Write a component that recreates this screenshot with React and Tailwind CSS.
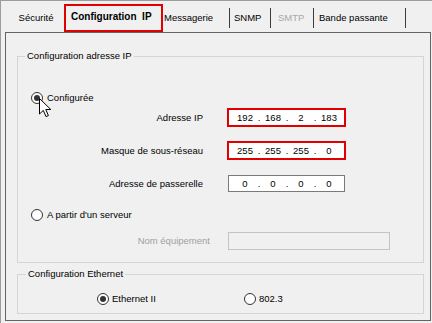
import React from "react";

function Radio({ checked }) {
  return (
    <span className="w-[12px] h-[12px] rounded-full border border-[#333333] bg-white flex items-center justify-center shrink-0">
      {checked && <span className="w-[6px] h-[6px] rounded-full bg-[#333333]" />}
    </span>
  );
}

function IpFields({ values }) {
  return (
    <div className="flex items-center h-full pl-[5px]">
      {values.map((v, i) => (
        <div key={i} className="flex items-center">
          <span className="w-[22px] text-center">{v}</span>
          {i < 3 && <span className="w-[6px] text-center">.</span>}
        </div>
      ))}
    </div>
  );
}

export default function App() {
  return (
    <div
      className="relative w-[432px] h-[323px] bg-[#f0f0f0] border-t border-l border-[#9c9c9c] flex flex-col text-[9.5px] leading-[12px] text-black overflow-hidden"
      style={{ fontFamily: '"Liberation Sans", Arial, sans-serif' }}
    >
      {/* Tabs */}
      <div className="h-[31px] flex items-end shrink-0">
        <div className="ml-[5px] w-[58px] h-[20px] mb-[4px] flex items-center justify-center pl-[2px]">Sécurité</div>
        <div className="w-[99px] h-[28px] border-2 border-[#e00000] flex items-center pl-[5px] pb-[2px] text-[10px] font-bold">
          Configuration&nbsp; IP
        </div>
        <div className="w-[66px] h-[20px] mb-[4px] flex items-center pl-[1px]">Messagerie</div>
        <div className="w-[41px] h-[20px] mb-[4px] flex items-center pl-[4px] border-l border-[#3c3c3c]">SNMP</div>
        <div className="w-[43px] h-[20px] mb-[4px] flex items-center pl-[7px] border-l border-[#3c3c3c] text-[#a8a8a8]">SMTP</div>
        <div className="w-[93px] h-[20px] mb-[4px] flex items-center pl-[5px] border-l border-r border-[#3c3c3c]">Bande passante</div>
      </div>

      {/* Panel */}
      <div className="flex-1 ml-[4px] mr-[1px] mb-[2px] border border-[#646464] flex flex-col">
        {/* Group 1 */}
        <div className="relative mt-[23px] ml-[11px] mr-[6px] h-[207px] border border-[#d5d5d5] flex flex-col">
          <span className="absolute left-[7px] top-[-7px] px-[2px] bg-[#f0f0f0]">Configuration adresse IP</span>

          <div className="mt-[35px] pl-[13px] flex items-center gap-[4px] h-[12px]">
            <Radio checked />
            <span>Configurée</span>
          </div>

          <div className="mt-[4px] flex items-center h-[19px]">
            <span className="w-[185px] text-right">Adresse IP</span>
            <div className="ml-[24px] w-[119px] h-[19px] border-2 border-[#e00000] bg-white">
              <IpFields values={["192", "168", "2", "183"]} />
            </div>
          </div>

          <div className="mt-[14px] flex items-center h-[19px]">
            <span className="w-[185px] text-right">Masque de sous-réseau</span>
            <div className="ml-[24px] w-[119px] h-[19px] border-2 border-[#e00000] bg-white">
              <IpFields values={["255", "255", "255", "0"]} />
            </div>
          </div>

          <div className="mt-[15px] flex items-center h-[17px]">
            <span className="w-[185px] text-right">Adresse de passerelle</span>
            <div className="ml-[25px] w-[117px] h-[17px] border border-[#7a7a7a] bg-white">
              <IpFields values={["0", "0", "0", "0"]} />
            </div>
          </div>

          <div className="mt-[17px] pl-[13px] flex items-center gap-[4px] h-[12px]">
            <Radio />
            <span>A partir d'un serveur</span>
          </div>

          <div className="mt-[11px] flex items-center h-[18px]">
            <span className="w-[192px] text-right text-[#a0a0a0]">Nom équipement</span>
            <div className="ml-[18px] w-[162px] h-[18px] border border-[#c4c4c4] bg-[#f0f0f0]" />
          </div>
        </div>

        {/* Group 2 */}
        <div className="relative mt-[11px] ml-[11px] mr-[6px] h-[40px] border border-[#d5d5d5] flex flex-col">
          <span className="absolute left-[8px] top-[-7px] px-[2px] bg-[#f0f0f0]">Configuration Ethernet</span>
          <div className="mt-[18px] pl-[79px] flex items-center h-[12px]">
            <div className="w-[147px] flex items-center gap-[3px]">
              <Radio checked />
              <span>Ethernet II</span>
            </div>
            <div className="flex items-center gap-[3px]">
              <Radio />
              <span>802.3</span>
            </div>
          </div>
        </div>
      </div>

      {/* Mouse cursor overlay */}
      <svg className="absolute left-[38px] top-[97px]" width="13" height="20" viewBox="0 0 13 20">
        <path d="M0.5 0.5 L0.5 16 L4.3 12.4 L7 18.6 L9.4 17.6 L6.8 11.5 L11.8 11.5 Z" fill="white" stroke="black" strokeWidth="1" strokeLinejoin="miter" />
      </svg>
    </div>
  );
}
